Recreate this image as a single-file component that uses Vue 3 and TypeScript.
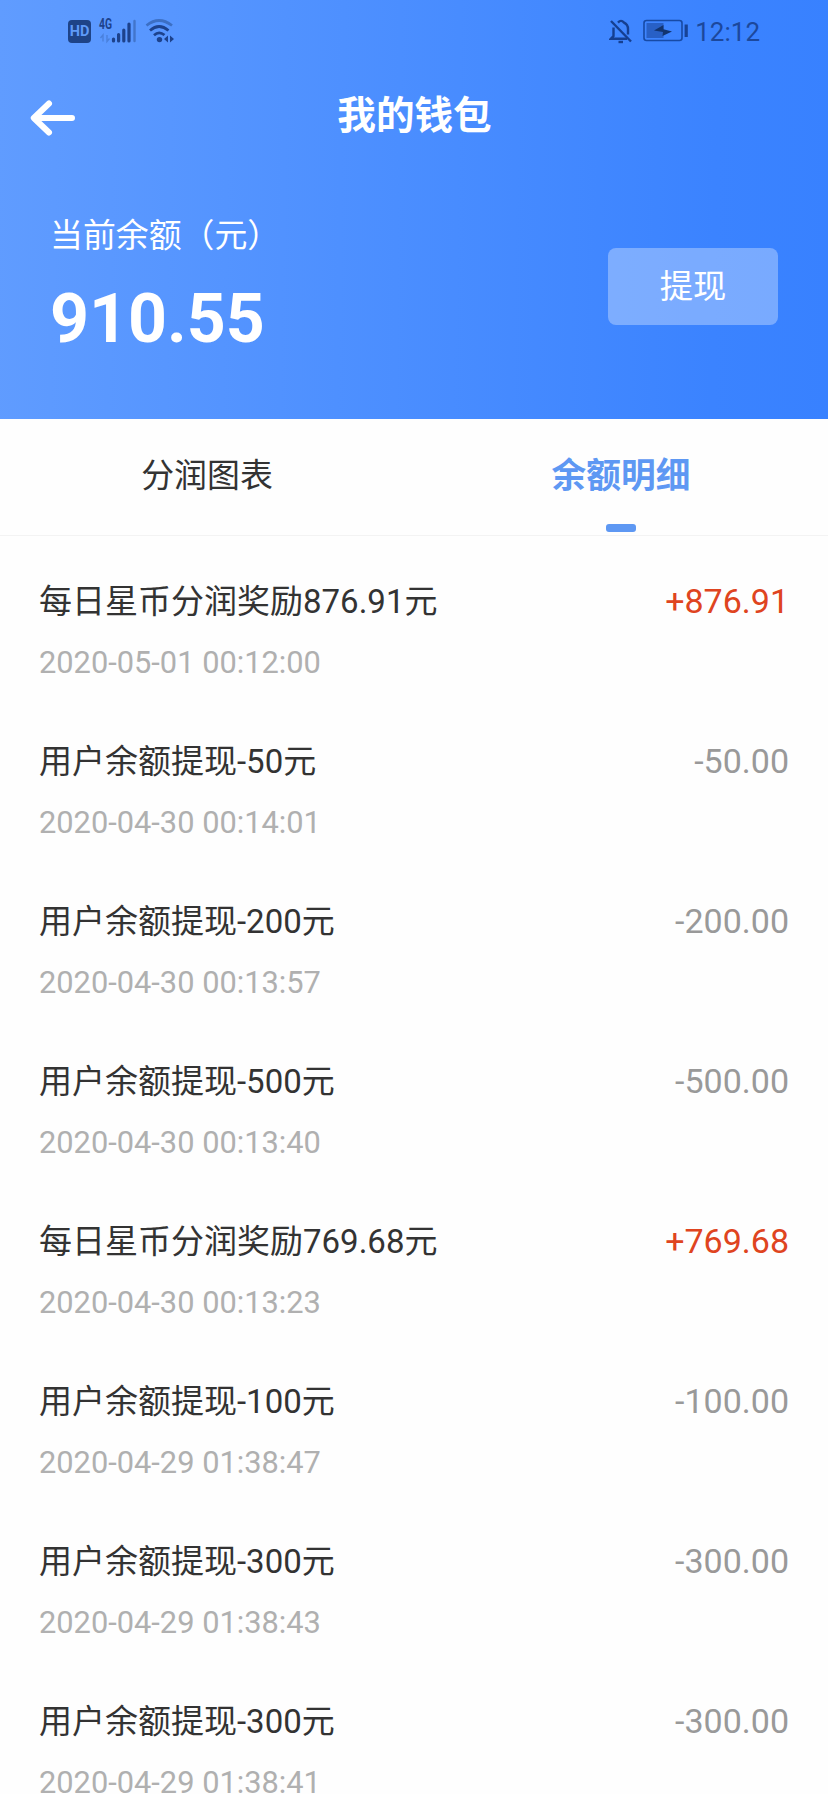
<script setup lang="ts">
interface LedgerEntry {
  title: string
  time: string
  amount: string
}

const tabs = [
  { label: '分润图表', active: false },
  { label: '余额明细', active: true },
]

const entries: LedgerEntry[] = [
  { title: '每日星币分润奖励876.91元', time: '2020-05-01 00:12:00', amount: '+876.91' },
  { title: '用户余额提现-50元', time: '2020-04-30 00:14:01', amount: '-50.00' },
  { title: '用户余额提现-200元', time: '2020-04-30 00:13:57', amount: '-200.00' },
  { title: '用户余额提现-500元', time: '2020-04-30 00:13:40', amount: '-500.00' },
  { title: '每日星币分润奖励769.68元', time: '2020-04-30 00:13:23', amount: '+769.68' },
  { title: '用户余额提现-100元', time: '2020-04-29 01:38:47', amount: '-100.00' },
  { title: '用户余额提现-300元', time: '2020-04-29 01:38:43', amount: '-300.00' },
  { title: '用户余额提现-300元', time: '2020-04-29 01:38:41', amount: '-300.00' },
]
</script>

<template>
  <div class="page">
    <header class="hero">
      <div class="status">
        <div class="status-left">
          <span class="hd">HD</span>
          <svg class="signal" width="40" height="30" viewBox="0 -4 40 30">
            <text x="1" y="11" class="net" textLength="13" lengthAdjust="spacingAndGlyphs">4G</text>
            <path class="faint" d="M5 23.5v-6.5l-2.5 3M9 17v6.5l2.5-3" />
            <path class="bars" d="M15.5 23v-2M20.6 23v-6.5M25.8 23v-11M31 23V6" />
            <path class="bars dim" d="M36.5 23V3" />
          </svg>
          <svg class="wifi" width="30" height="24" viewBox="0 0 30 24">
            <path class="arc dim" d="M1.5 6.5Q14 -3.5 27 6.5" />
            <path class="arc" d="M5 11.5Q14 3.5 23.5 11.5" />
            <path class="arc" d="M9 16.2Q14 11.6 19.5 16" />
            <circle cx="14.5" cy="20.6" r="2.7" fill="#1d428c" />
            <path d="M23 16.5v7l-4-3.5zM25 16.5v7l4-3.5z" fill="#1d428c" />
          </svg>
        </div>
        <div class="status-right">
          <svg width="24" height="26" viewBox="0 0 24 26" fill="none" stroke="#153f91" stroke-width="2.4">
            <path d="M2 3L22 23.5" />
            <path d="M4.5 9.5V18L2 20.7H18M9 4.6Q12 1.2 15 4.6Q19 6.5 19 11V16.5" />
            <path d="M9.5 24H14" />
          </svg>
          <svg class="battery" width="46" height="24" viewBox="0 0 46 24">
            <rect x="1" y="1.5" width="38" height="20" rx="2.5" fill="none" stroke="#174aa5" stroke-width="1.6" />
            <rect x="3.5" y="4" width="17" height="15" fill="#2860c6" />
            <path d="M11 11.5L20.5 6L20.5 10.2L29 12.5L19.5 17L20 13Z" fill="#12346f" />
            <path d="M43.2 5.5V18" stroke="#174396" stroke-width="3.2" />
          </svg>
          <span class="clock">12:12</span>
        </div>
      </div>

      <nav class="nav">
        <svg class="back" width="50" height="40" viewBox="0 0 50 40">
          <path d="M20 5.5L4.8 20L20 34.5M5 20H43" />
        </svg>
        <h1 class="title">我的钱包</h1>
        <span class="nav-end"></span>
      </nav>

      <section class="balance">
        <div>
          <div class="balance-label">当前余额（元）</div>
          <div class="balance-value">910.55</div>
        </div>
        <button class="withdraw" type="button">提现</button>
      </section>
    </header>

    <div class="tabs">
      <div v-for="tab in tabs" :key="tab.label" class="tab" :class="{ active: tab.active }">
        <span class="tab-label">{{ tab.label }}</span>
        <span class="tab-mark"></span>
      </div>
    </div>

    <ul class="list">
      <li v-for="entry in entries" :key="entry.time" class="row">
        <div>
          <div class="row-title">{{ entry.title }}</div>
          <div class="row-time">{{ entry.time }}</div>
        </div>
        <div class="row-amount" :class="{ income: entry.amount.startsWith('+') }">{{ entry.amount }}</div>
      </li>
    </ul>
  </div>
</template>

<style>
body {
  margin: 0;
  background: #fefefe;
}
</style>

<style scoped>
.page {
  width: 828px;
  height: 1794px;
  overflow: hidden;
  background: #fefefe;
  font-family: Roboto, "Noto Sans CJK SC", sans-serif;
  color: #333;
}
.hero {
  height: 419px;
  background: linear-gradient(91deg, #609cff 0%, #4b8eff 48%, #3b83ff 86%, #3881ff 100%);
}
.status {
  height: 62px;
  display: flex;
  justify-content: space-between;
  box-sizing: border-box;
  padding: 0 68px;
}
.status-left,
.status-right {
  display: flex;
  align-items: flex-start;
}
.hd {
  margin-top: 20px;
  width: 23px;
  height: 23px;
  border-radius: 4px;
  background: #1e4387;
  color: #5f9af8;
  font-size: 14.5px;
  line-height: 23px;
  font-weight: 700;
  text-align: center;
}
.signal {
  margin: 14px 0 0 7px;
  overflow: visible;
}
.net {
  font-size: 14px;
  font-weight: 700;
  fill: #1d428c;
}
.faint {
  fill: none;
  stroke: #4a80dc;
  stroke-width: 1.4;
}
.bars {
  stroke: #1d428c;
  stroke-width: 3.2;
  stroke-linecap: round;
}
.bars.dim {
  stroke: #4275cb;
  stroke-width: 2.4;
}
.wifi {
  margin: 19px 0 0 7px;
}
.arc {
  fill: none;
  stroke: #1d428c;
  stroke-width: 2.7;
}
.arc.dim {
  stroke: #3c6fc4;
}
.status-right > svg {
  margin-top: 18px;
}
.status-right > .battery {
  margin: 19px 0 0 10px;
}
.clock {
  margin: 16px 0 0 6px;
  line-height: 32px;
  font-size: 26px;
  color: #1c489c;
}
.nav {
  height: 108px;
  display: flex;
  align-items: center;
  justify-content: space-between;
  padding: 0 28px 0 29px;
}
.back {
  fill: none;
  stroke: #fff;
  stroke-width: 6;
  stroke-linecap: round;
  stroke-linejoin: round;
  margin-top: 3px;
}
.title {
  margin: 0;
  color: #fff;
  font-size: 38.6px;
  font-weight: 700;
  line-height: 50px;
}
.nav-end {
  width: 50px;
}
.balance {
  height: 249px;
  box-sizing: border-box;
  padding: 44px 50px 0;
  display: flex;
  justify-content: space-between;
  color: #fff;
}
.balance-label {
  font-size: 32.9px;
  line-height: 44px;
}
.balance-value {
  margin-top: 21px;
  font-size: 68px;
  line-height: 80px;
  font-weight: 700;
}
.withdraw {
  margin: 34px 0 0;
  width: 170px;
  height: 77px;
  padding: 0 0 7px;
  border: 0;
  border-radius: 8px;
  background: rgba(255, 255, 255, 0.32);
  color: #fff;
  font: inherit;
  font-size: 33.3px;
}
.tabs {
  height: 117px;
  box-sizing: border-box;
  border-bottom: 1px solid #f3f3f3;
  display: flex;
}
.tab {
  flex: 1;
  display: flex;
  flex-direction: column;
  align-items: center;
  justify-content: space-between;
  padding: 33px 0 3px;
}
.tab-label {
  font-size: 32.9px;
  line-height: 48px;
}
.active .tab-label {
  color: #5e98f3;
  font-size: 34.7px;
  font-weight: 700;
}
.tab-mark {
  width: 30px;
  height: 8px;
  border-radius: 3px;
}
.active .tab-mark {
  background: #5e98f3;
}
.list {
  list-style: none;
  margin: 0;
  padding: 25px 39px 0;
}
.row {
  height: 160px;
  box-sizing: border-box;
  padding-top: 17px;
  display: flex;
  justify-content: space-between;
}
.row-title {
  font-size: 33px;
  line-height: 48px;
}
.row-time {
  margin-top: 17px;
  font-size: 30.8px;
  line-height: 40px;
  color: #b0b0b0;
}
.row-amount {
  font-size: 34px;
  line-height: 46px;
  color: #999;
}
.row-amount.income {
  color: #df4420;
}
</style>
